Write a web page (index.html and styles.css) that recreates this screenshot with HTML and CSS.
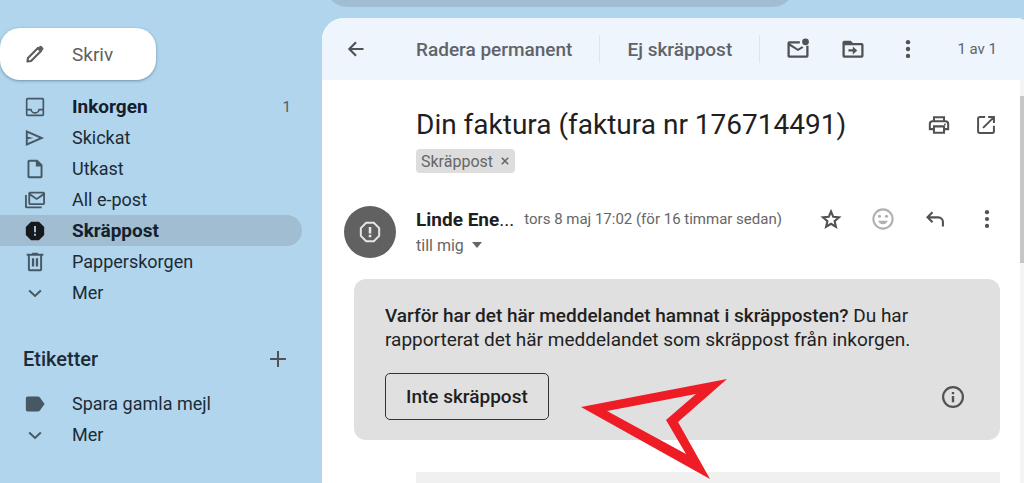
FILE: index.html
```html
<!DOCTYPE html>
<html lang="sv">
<head>
<meta charset="utf-8">
<meta name="viewport" content="width=device-width, initial-scale=1">
<title>Skräppost</title>
<link rel="stylesheet" href="styles.css">
</head>
<body>
<div class="app">
  <aside class="sidebar">
    <button class="compose" type="button">
      <svg class="icon" viewBox="0 0 24 24"><path d="M3 21l.6-4.300L15.500 4.800l3.700 3.700L7.300 20.400z" fill="none" stroke="currentColor" stroke-width="2.600" stroke-linejoin="round"/><path d="M14.500 5.800l3-3a1.800 1.800 0 0 1 2.500 0l1.700 1.700a1.800 1.800 0 0 1 0 2.500l-3 3z"/></svg>
      <span>Skriv</span>
    </button>
    <nav class="nav" aria-label="Mappar">
      <a class="nav-item strong" href="#"><svg class="icon" viewBox="0 0 24 24"><path d="M3 1h18a2 2 0 0 1 2 2v18a2 2 0 0 1-2 2H3a2 2 0 0 1-2-2V3a2 2 0 0 1 2-2zm0 2v11h5a4 4 0 0 0 8 0h5V3zm0 13.200V21h18v-4.800h-3.300a6.200 6.200 0 0 1-11.400 0z"/></svg><span>Inkorgen</span><span class="count">1</span></a>
      <a class="nav-item" href="#"><svg class="icon" viewBox="0 0 24 24"><path d="M1 2.500v19L23 12zm2.300 3.600L17 12 3.300 17.900v-4.300L10 12 3.300 10.400z"/></svg><span>Skickat</span></a>
      <a class="nav-item" href="#"><svg class="icon" viewBox="0 0 24 24"><path d="M5 1h10l6 6v14a2 2 0 0 1-2 2H5a2 2 0 0 1-2-2V3a2 2 0 0 1 2-2zm.3 2.300v17.400h13.400V9H13V3.300z"/></svg><span>Utkast</span></a>
      <a class="nav-item" href="#"><svg class="icon wide" viewBox="0 0 26 24"><path d="M7 2h16a2 2 0 0 1 2 2v12a2 2 0 0 1-2 2H7a2 2 0 0 1-2-2V4a2 2 0 0 1 2-2zm.2 4.800v9h15.600v-9L15 12zM7.500 4.200L15 9.500l7.500-5.300zM1 6h2.200v13.800H21V22H3a2 2 0 0 1-2-2z"/></svg><span>All e-post</span></a>
      <a class="nav-item strong selected" href="#" aria-current="page"><svg class="icon" viewBox="0 0 24 24"><path fill-rule="evenodd" d="M7.300 1h9.400L23 7.300v9.400L16.700 23H7.300L1 16.700V7.300zM10.800 6v7.500h2.400V6zm0 9.200v2.500h2.400v-2.500z"/></svg><span>Skräppost</span></a>
      <a class="nav-item" href="#"><svg class="icon" viewBox="0 0 24 24"><path fill-rule="evenodd" d="M8.500 1h7v1.200H22v2.300h-1.500V21a2 2 0 0 1-2 2h-13a2 2 0 0 1-2-2V4.500H2V2.200h6.500zM5.800 4.500v16.200h12.400V4.500zM8.300 7.500H11v10H8.300zm4.700 0h2.700v10H13z"/></svg><span>Papperskorgen</span></a>
      <a class="nav-item" href="#"><svg class="icon" viewBox="0 0 24 24"><path d="M5 9l7 6.500L19 9" fill="none" stroke="currentColor" stroke-width="2.400"/></svg><span>Mer</span></a>
    </nav>
    <div class="labels-head">
      <h2>Etiketter</h2>
      <button class="icon-button" type="button" aria-label="Skapa ny etikett"><svg class="icon" viewBox="0 0 24 24"><path d="M12 2.500v19M2.500 12h19" fill="none" stroke="currentColor" stroke-width="2.400"/></svg></button>
    </div>
    <nav class="nav" aria-label="Etiketter">
      <a class="nav-item" href="#"><svg class="icon" viewBox="0 0 24 24"><path d="M3 3h12.500a3 3 0 0 1 2.400 1.200L23.500 12l-5.600 7.800a3 3 0 0 1-2.400 1.200H3a2 2 0 0 1-2-2V5a2 2 0 0 1 2-2z"/></svg><span>Spara gamla mejl</span></a>
      <a class="nav-item" href="#"><svg class="icon" viewBox="0 0 24 24"><path d="M5 9l7 6.500L19 9" fill="none" stroke="currentColor" stroke-width="2.400"/></svg><span>Mer</span></a>
    </nav>
  </aside>

  <div class="content">
    <header class="topbar"><input class="search" type="search" aria-label="Sök i e-post"></header>
    <main class="panel">
      <div class="toolbar">
        <div class="gutter"><button class="icon-button" type="button" aria-label="Tillbaka"><svg class="icon" viewBox="0 0 24 24"><path d="M21 12H4M12 4l-8 8 8 8" fill="none" stroke="currentColor" stroke-width="2.600"/></svg></button></div>
        <button class="text-button" type="button">Radera permanent</button>
        <span class="divider"></span>
        <button class="text-button" type="button">Ej skräppost</button>
        <span class="divider"></span>
        <div class="tools">
          <button class="icon-button" type="button" aria-label="Markera som oläst"><svg class="icon large" viewBox="0 0 24 24"><path d="M14 3.500H2.500a2 2 0 0 0-2 2V19.500a2 2 0 0 0 2 2h19a2 2 0 0 0 2-2V8.500H21v10.700H3V8.700l9 5.600 6-3.700-1.700-1.700L12 11.600 3.200 6H14z"/><circle cx="20.200" cy="4.200" r="3.700"/></svg></button>
          <button class="icon-button" type="button" aria-label="Flytta till"><svg class="icon large" viewBox="0 0 24 24"><path fill-rule="evenodd" d="M2.500 3h7L12 5.500h9.500a2 2 0 0 1 2 2v12a2 2 0 0 1-2 2h-19a2 2 0 0 1-2-2V5a2 2 0 0 1 2-2zM3 8v11.200h18V8zm4 4.400h4.800V9.300l4.800 4.300-4.800 4.300v-3.100H7z"/></svg></button>
          <button class="icon-button" type="button" aria-label="Mer"><svg class="icon large" viewBox="0 0 24 24"><circle cx="12" cy="4.500" r="2.400"/><circle cx="12" cy="12" r="2.400"/><circle cx="12" cy="19.500" r="2.400"/></svg></button>
        </div>
        <span class="pager">1 av 1</span>
      </div>

      <div class="viewport">
        <article class="thread">
          <div class="subject">
            <h1>Din faktura (faktura nr 176714491)</h1>
            <div class="subject-tools">
              <button class="icon-button" type="button" aria-label="Skriv ut"><svg class="icon large" viewBox="0 0 24 24"><g fill="none" stroke="currentColor" stroke-width="2.200"><path d="M6.500 8V3.500h11V8M6 16.500H2V11a3 3 0 0 1 3-3h14a3 3 0 0 1 3 3v5.500h-4M6.500 13.500h11v7h-11z"/></g><circle cx="18.500" cy="11.300" r="1"/></svg></button>
              <button class="icon-button" type="button" aria-label="I nytt fönster"><svg class="icon" viewBox="0 0 24 24"><path d="M11 2.500H4.500a2 2 0 0 0-2 2v15a2 2 0 0 0 2 2h15a2 2 0 0 0 2-2V13M14.500 2.500h7v7M21.500 2.500L8.500 15.500" fill="none" stroke="currentColor" stroke-width="2.400"/></svg></button>
            </div>
          </div>
          <span class="chip">Skräppost<button type="button" aria-label="Ta bort etiketten Skräppost"><svg viewBox="0 0 10 10"><path d="M1 1l8 8M9 1L1 9" fill="none" stroke="currentColor" stroke-width="2"/></svg></button></span>

          <div class="message-head">
            <div class="avatar"><svg class="icon large" viewBox="0 0 24 24"><path d="M7.800 2h8.400L22 7.800v8.400L16.200 22H7.800L2 16.200V7.800z" fill="none" stroke="currentColor" stroke-width="2.200"/><path d="M10.600 6.500h2.800v7h-2.800zM10.600 15h2.800v2.600h-2.800z"/></svg></div>
            <div class="meta">
              <div class="meta-line"><strong>Linde Ene<span>...</span></strong><time>tors 8 maj 17:02 (för 16 timmar sedan)</time></div>
              <button class="recipient" type="button">till mig <svg viewBox="0 0 10 6"><path d="M0 0h10L5 6z"/></svg></button>
            </div>
            <div class="message-tools">
              <button class="icon-button" type="button" aria-label="Stjärnmärk"><svg class="icon" viewBox="0 0 24 24"><path d="M12 3l2.700 6.400 6.900.6-5.300 4.500 1.600 6.800-5.900-3.600-5.900 3.600 1.600-6.800L2.400 10l6.900-.6z" fill="none" stroke="currentColor" stroke-width="2.500"/></svg></button>
              <button class="icon-button muted" type="button" aria-label="Reagera med emoji"><svg class="icon large" viewBox="0 0 24 24"><circle cx="12" cy="12" r="10.500" fill="none" stroke="currentColor" stroke-width="2.200"/><circle cx="8.200" cy="9" r="1.700"/><circle cx="15.800" cy="9" r="1.700"/><path d="M6.800 14h10.400a5.500 5.500 0 0 1-10.400 0z"/></svg></button>
              <button class="icon-button" type="button" aria-label="Svara"><svg class="icon" viewBox="0 0 24 24"><path d="M9 4L3 10l6 6M3 10h13a5.500 5.500 0 0 1 5.500 5.500V21" fill="none" stroke="currentColor" stroke-width="2.500"/></svg></button>
              <button class="icon-button" type="button" aria-label="Mer"><svg class="icon large" viewBox="0 0 24 24"><circle cx="12" cy="4.500" r="2.300"/><circle cx="12" cy="12" r="2.300"/><circle cx="12" cy="19.500" r="2.300"/></svg></button>
            </div>
          </div>

          <section class="notice">
            <p><b>Varför har det här meddelandet hamnat i skräpposten?</b> Du har rapporterat det här meddelandet som skräppost från inkorgen.</p>
            <div class="notice-row">
              <button class="outlined" type="button">Inte skräppost</button>
              <button class="icon-button" type="button" aria-label="Läs mer"><svg class="icon large" viewBox="0 0 24 24"><circle cx="12" cy="12" r="10.800" fill="none" stroke="currentColor" stroke-width="2.400"/><path d="M10.700 11h2.600v6.800h-2.600zM10.700 6.500h2.600v2.600h-2.600z"/></svg></button>
            </div>
            <svg class="pointer" viewBox="0 0 146 100" aria-hidden="true"><path fill-rule="evenodd" d="M0 28L146 0 97 43l32 57zM26 32l79 43-20-34 30-26z"/></svg>
          </section>
          <div class="message-body"></div>
        </article>
        <div class="scrollbar"><div class="thumb"></div></div>
      </div>
    </main>
  </div>
</div>
</body>
</html>
```

FILE: styles.css
```css
* { box-sizing: border-box; }
body {
  margin: 0;
  background: #b1d5ed;
  color: #1f1f1f;
  font-family: Roboto, "Open Sans", sans-serif;
  font-size: 19px;
  overflow: hidden;
}
button { font: inherit; color: inherit; background: none; border: 0; padding: 0; cursor: pointer; }
a { color: inherit; text-decoration: none; }
h1, h2, p { margin: 0; }
svg { display: block; fill: currentColor; overflow: visible; }
.icon { width: 20px; height: 20px; flex: none; }
.icon.large { width: 22px; height: 22px; }
.icon.wide { width: 24px; margin: 0 -2px; }
.icon-button { display: grid; place-items: center; flex: none; color: #505352; }
.icon-button.muted { color: #b0b0b0; }

.app { display: grid; grid-template-columns: 322px minmax(0, 1fr); min-height: 100vh; }

.sidebar { padding: 28px 20px 0 0; color: #1c2b36; }
.compose {
  display: flex;
  align-items: center;
  gap: 27px;
  height: 52px;
  padding: 0 43px 0 25px;
  border-radius: 20px;
  background: #fff;
  color: #5f5f5f;
  box-shadow: 0 1px 3px rgba(50, 80, 100, .5);
}
.nav { padding-top: 11px; }
.nav-item {
  display: flex;
  align-items: center;
  gap: 27px;
  height: 31px;
  padding: 0 11px 0 25px;
  border-radius: 0 16px 16px 0;
  font-size: 18px;
}
.nav-item .icon { color: #465864; }
.nav-item.strong { font-size: 19px; font-weight: 700; color: #14202a; }
.nav-item.selected { background: #a0bdd2; }
.nav-item.selected .icon { color: #16191c; }
.count { margin-left: auto; font-size: 15px; font-weight: 400; color: #4b5d69; }
.labels-head {
  display: flex;
  align-items: center;
  justify-content: space-between;
  height: 36px;
  margin-top: 33px;
  padding: 0 14px 0 23px;
}
.labels-head h2 { font-size: 20px; font-weight: 500; }

.content { display: flex; flex-direction: column; min-width: 0; }
.topbar { display: flex; align-items: flex-end; height: 18px; padding: 0 228px 11px 2px; overflow: hidden; }
.search { flex: 1; min-width: 0; height: 48px; border: 0; border-radius: 24px; background: #a0bdd2; }
.panel {
  display: flex;
  flex-direction: column;
  flex: 1;
  border-radius: 22px 8px 0 0 / 22px 3px 0 0;
  background: #fff;
  overflow: hidden;
}
.toolbar {
  display: flex;
  align-items: center;
  height: 62px;
  padding-right: 27px;
  background: #eef5fc;
  color: #606468;
}
.gutter { width: 94px; padding-left: 24px; }
.text-button { font-weight: 500; white-space: nowrap; }
.divider { width: 1px; height: 28px; margin: 0 27px; background: #dde4ea; }
.tools { display: flex; gap: 33px; }
.pager { margin-left: auto; font-size: 15px; }

.viewport { display: flex; flex: 1; }
.thread { display: flex; flex-direction: column; align-items: stretch; flex: 1; min-width: 0; padding: 26px 20px 0 22px; }
.scrollbar { width: 4px; padding-top: 16px; background: #f4f4f4; }
.thumb { height: 167px; background: #c6c6c6; }
.subject { display: flex; align-items: center; justify-content: space-between; padding-left: 72px; }
.subject h1 { font-size: 28px; line-height: 38px; font-weight: 400; }
.subject-tools { display: flex; gap: 26px; padding-right: 4px; }
.chip {
  display: inline-flex;
  align-items: center;
  align-self: flex-start;
  gap: 8px;
  height: 24px;
  margin: 5px 0 0 72px;
  padding: 0 6px 0 5px;
  border-radius: 4px;
  background: #dddddd;
  color: #666;
  font-size: 16px;
}
.chip svg { width: 8px; height: 8px; }

.message-head { display: flex; margin-top: 33px; }
.avatar {
  display: grid;
  place-items: center;
  flex: none;
  width: 52px;
  height: 52px;
  margin-right: 20px;
  border-radius: 50%;
  background: #616161;
  color: #e6e6e6;
}
.meta { flex: 1; min-width: 0; }
.meta-line { display: flex; align-items: center; gap: 10px; height: 26px; white-space: nowrap; }
.meta-line strong span { font-weight: 400; }
.meta-line time, .recipient { font-size: 16px; color: #666; }
.meta-line time { font-size: 15px; }
.recipient { display: flex; align-items: center; gap: 8px; height: 26px; }
.recipient svg { width: 10px; height: 6px; }
.message-tools { display: flex; gap: 31px; height: 26px; padding-right: 2px; }

.notice {
  position: relative;
  margin: 21px 0 0 10px;
  padding: 25px 36px 20px 31px;
  border-radius: 12px;
  background: #e0e0e0;
  line-height: 24px;
}
.notice b { font-weight: 500; }
.notice-row { display: flex; align-items: center; justify-content: space-between; margin-top: 21px; }
.outlined { height: 47px; padding: 0 20px; border: 1px solid #333; border-radius: 5px; font-weight: 500; }
.pointer { position: absolute; left: 227px; top: 100px; width: 146px; height: 100px; color: #ee1c25; }
.message-body { flex: 1; min-height: 11px; margin: 32px 0 0 72px; background: #f0f0f0; }
```
